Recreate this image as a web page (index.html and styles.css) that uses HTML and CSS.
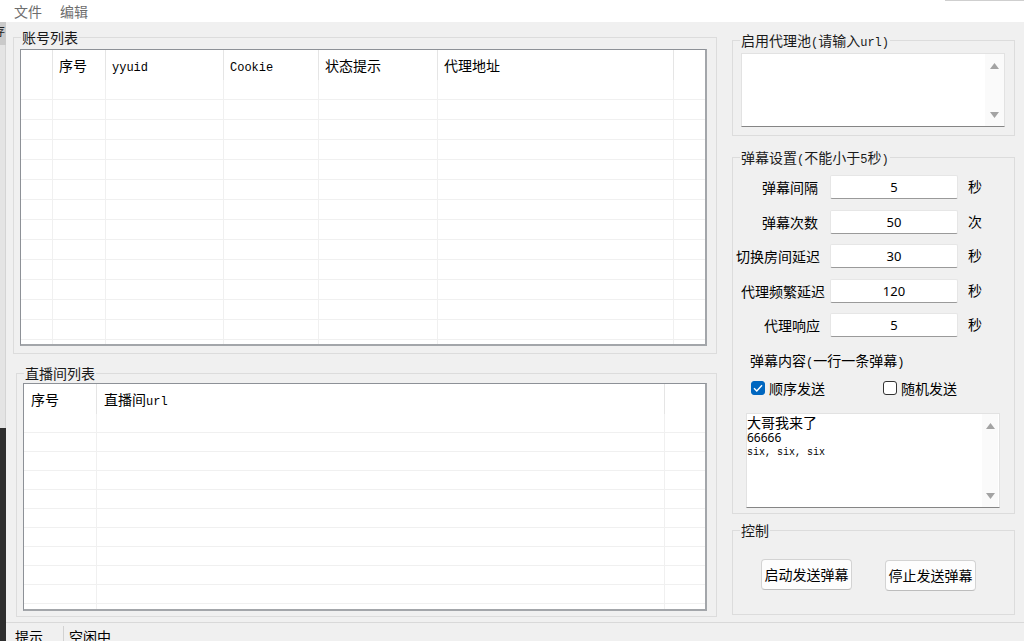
FILE: index.html
```html
<!DOCTYPE html>
<html lang="zh-CN">
<head>
<meta charset="utf-8">
<title>弹幕助手</title>
<link rel="stylesheet" href="styles.css">
</head>
<body>
<div class="window">
  <div class="menubar"><span class="menu-item">文件</span><span class="menu-item">编辑</span></div>
  <div class="main">
    <div class="left-col">
      <fieldset class="group acc-group">
        <legend>账号列表</legend>
        <div class="listview acc-lv">
          <div class="lv-row acc-cols lv-head">
            <div class="lv-cell"></div>
            <div class="lv-cell">序号</div>
            <div class="lv-cell"><span class="m">yyuid</span></div>
            <div class="lv-cell"><span class="m">Cookie</span></div>
            <div class="lv-cell">状态提示</div>
            <div class="lv-cell">代理地址</div>
            <div class="lv-cell last"></div>
          </div>
          <div class="lv-row acc-cols"><div class="lv-cell"></div><div class="lv-cell"></div><div class="lv-cell"></div><div class="lv-cell"></div><div class="lv-cell"></div><div class="lv-cell"></div><div class="lv-cell last"></div></div>
          <div class="lv-row acc-cols"><div class="lv-cell"></div><div class="lv-cell"></div><div class="lv-cell"></div><div class="lv-cell"></div><div class="lv-cell"></div><div class="lv-cell"></div><div class="lv-cell last"></div></div>
          <div class="lv-row acc-cols"><div class="lv-cell"></div><div class="lv-cell"></div><div class="lv-cell"></div><div class="lv-cell"></div><div class="lv-cell"></div><div class="lv-cell"></div><div class="lv-cell last"></div></div>
          <div class="lv-row acc-cols"><div class="lv-cell"></div><div class="lv-cell"></div><div class="lv-cell"></div><div class="lv-cell"></div><div class="lv-cell"></div><div class="lv-cell"></div><div class="lv-cell last"></div></div>
          <div class="lv-row acc-cols"><div class="lv-cell"></div><div class="lv-cell"></div><div class="lv-cell"></div><div class="lv-cell"></div><div class="lv-cell"></div><div class="lv-cell"></div><div class="lv-cell last"></div></div>
          <div class="lv-row acc-cols"><div class="lv-cell"></div><div class="lv-cell"></div><div class="lv-cell"></div><div class="lv-cell"></div><div class="lv-cell"></div><div class="lv-cell"></div><div class="lv-cell last"></div></div>
          <div class="lv-row acc-cols"><div class="lv-cell"></div><div class="lv-cell"></div><div class="lv-cell"></div><div class="lv-cell"></div><div class="lv-cell"></div><div class="lv-cell"></div><div class="lv-cell last"></div></div>
          <div class="lv-row acc-cols"><div class="lv-cell"></div><div class="lv-cell"></div><div class="lv-cell"></div><div class="lv-cell"></div><div class="lv-cell"></div><div class="lv-cell"></div><div class="lv-cell last"></div></div>
          <div class="lv-row acc-cols"><div class="lv-cell"></div><div class="lv-cell"></div><div class="lv-cell"></div><div class="lv-cell"></div><div class="lv-cell"></div><div class="lv-cell"></div><div class="lv-cell last"></div></div>
          <div class="lv-row acc-cols"><div class="lv-cell"></div><div class="lv-cell"></div><div class="lv-cell"></div><div class="lv-cell"></div><div class="lv-cell"></div><div class="lv-cell"></div><div class="lv-cell last"></div></div>
          <div class="lv-row acc-cols"><div class="lv-cell"></div><div class="lv-cell"></div><div class="lv-cell"></div><div class="lv-cell"></div><div class="lv-cell"></div><div class="lv-cell"></div><div class="lv-cell last"></div></div>
          <div class="lv-row acc-cols"><div class="lv-cell"></div><div class="lv-cell"></div><div class="lv-cell"></div><div class="lv-cell"></div><div class="lv-cell"></div><div class="lv-cell"></div><div class="lv-cell last"></div></div>
          <div class="lv-row acc-cols"><div class="lv-cell"></div><div class="lv-cell"></div><div class="lv-cell"></div><div class="lv-cell"></div><div class="lv-cell"></div><div class="lv-cell"></div><div class="lv-cell last"></div></div>
          <div class="lv-row acc-cols"><div class="lv-cell"></div><div class="lv-cell"></div><div class="lv-cell"></div><div class="lv-cell"></div><div class="lv-cell"></div><div class="lv-cell"></div><div class="lv-cell last"></div></div>
        </div>
      </fieldset>
      <fieldset class="group room-group">
        <legend>直播间列表</legend>
        <div class="listview room-lv">
          <div class="lv-row room-cols lv-head room-head">
            <div class="lv-cell">序号</div>
            <div class="lv-cell">直播间<span class="m">url</span></div>
            <div class="lv-cell last"></div>
          </div>
          <div class="lv-row room-cols room-row"><div class="lv-cell"></div><div class="lv-cell"></div><div class="lv-cell last"></div></div>
          <div class="lv-row room-cols room-row"><div class="lv-cell"></div><div class="lv-cell"></div><div class="lv-cell last"></div></div>
          <div class="lv-row room-cols room-row"><div class="lv-cell"></div><div class="lv-cell"></div><div class="lv-cell last"></div></div>
          <div class="lv-row room-cols room-row"><div class="lv-cell"></div><div class="lv-cell"></div><div class="lv-cell last"></div></div>
          <div class="lv-row room-cols room-row"><div class="lv-cell"></div><div class="lv-cell"></div><div class="lv-cell last"></div></div>
          <div class="lv-row room-cols room-row"><div class="lv-cell"></div><div class="lv-cell"></div><div class="lv-cell last"></div></div>
          <div class="lv-row room-cols room-row"><div class="lv-cell"></div><div class="lv-cell"></div><div class="lv-cell last"></div></div>
          <div class="lv-row room-cols room-row"><div class="lv-cell"></div><div class="lv-cell"></div><div class="lv-cell last"></div></div>
          <div class="lv-row room-cols room-row"><div class="lv-cell"></div><div class="lv-cell"></div><div class="lv-cell last"></div></div>
          <div class="lv-row room-cols room-row"><div class="lv-cell"></div><div class="lv-cell"></div><div class="lv-cell last"></div></div>
          <div class="lv-row room-cols room-row"><div class="lv-cell"></div><div class="lv-cell"></div><div class="lv-cell last"></div></div>
        </div>
      </fieldset>
    </div>

    <div class="right-col">
      <fieldset class="group proxy-group">
        <legend>启用代理池<span class="m">(</span>请输入<span class="m">url)</span></legend>
        <div class="edit proxy-edit">
          <div class="edit-text"></div>
          <div class="vscroll proxy-scroll">
            <svg width="9" height="6" viewBox="0 0 9 6"><path d="M4.5 0L9 6H0Z" fill="#a3a3a3"/></svg>
            <svg width="9" height="6" viewBox="0 0 9 6"><path d="M0 0H9L4.5 6Z" fill="#a3a3a3"/></svg>
          </div>
        </div>
      </fieldset>

      <fieldset class="group settings-group">
        <legend>弹幕设置<span class="m">(</span>不能小于<span class="m">5</span>秒<span class="m">)</span></legend>
        <div class="settings-grid">
          <div class="s-label">弹幕间隔</div><div class="s-input">5</div><div class="s-unit">秒</div>
          <div class="s-label">弹幕次数</div><div class="s-input">50</div><div class="s-unit">次</div>
          <div class="s-label mid">切换房间延迟</div><div class="s-input">30</div><div class="s-unit">秒</div>
          <div class="s-label wide">代理频繁延迟</div><div class="s-input">120</div><div class="s-unit">秒</div>
          <div class="s-label mid">代理响应</div><div class="s-input">5</div><div class="s-unit">秒</div>
        </div>
        <div class="content-label">弹幕内容<span class="m">(</span>一行一条弹幕<span class="m">)</span></div>
        <div class="check-row">
          <div class="check-item">
            <span class="checkbox checked"><svg width="10" height="8" viewBox="0 0 10 8"><path d="M1 4.2L3.8 7L9 1.2" fill="none" stroke="#ffffff" stroke-width="1.4"/></svg></span>
            <span>顺序发送</span>
          </div>
          <div class="check-item second">
            <span class="checkbox"></span>
            <span>随机发送</span>
          </div>
        </div>
        <div class="edit content-edit">
          <div class="edit-text content-text">
            <div class="line-cn">大哥我来了</div>
            <div class="line-num">66666</div>
            <div class="line-mono">six, six, six</div>
          </div>
          <div class="vscroll content-scroll">
            <svg width="9" height="6" viewBox="0 0 9 6"><path d="M4.5 0L9 6H0Z" fill="#a3a3a3"/></svg>
            <svg width="9" height="6" viewBox="0 0 9 6"><path d="M0 0H9L4.5 6Z" fill="#a3a3a3"/></svg>
          </div>
        </div>
      </fieldset>

      <fieldset class="group control-group">
        <legend>控制</legend>
        <div class="btn-row">
          <div class="btn">启动发送弹幕</div>
          <div class="btn second">停止发送弹幕</div>
        </div>
      </fieldset>
    </div>
  </div>
  <div class="statusbar">
    <div class="st-cell first">提示</div>
    <div class="st-cell">空闲中</div>
  </div>
</div>

<div class="edge">
  <div class="edge-tab"><span class="edge-glyph">存</span></div>
  <div class="edge-light"></div>
  <div class="edge-dark"></div>
</div>
<div class="top-box"></div>
</body>
</html>
```

FILE: styles.css
```css
* {
  box-sizing: border-box;
}

html, body {
  margin: 0;
  padding: 0;
}

body {
  width: 1024px;
  height: 641px;
  overflow: hidden;
  background: #f0f0f0;
  font-family: "Noto Sans CJK SC", "Noto Sans", sans-serif;
  font-size: 14px;
  color: #000;
  position: relative;
}

.m {
  font-family: "Liberation Mono", "DejaVu Sans Mono", monospace;
  font-size: 12px;
  line-height: 0;
}

.window {
  display: flex;
  flex-direction: column;
  height: 641px;
}

/* menu */
.menubar {
  height: 22px;
  background: #ffffff;
  display: flex;
  align-items: center;
  padding-left: 14px;
  gap: 18px;
  flex: none;
}

.menu-item {
  color: #6d6d6d;
  font-size: 14px;
  line-height: 22px;
}

/* main */
.main {
  height: 600px;
  flex: none;
  display: flex;
  gap: 15px;
  padding: 6px 0 0 13px;
}

.left-col {
  width: 704px;
  flex: none;
  display: flex;
  flex-direction: column;
}

.right-col {
  width: 283px;
  flex: none;
  display: flex;
  flex-direction: column;
  padding-top: 3px;
}

/* group boxes */
.group {
  margin: 0;
  padding: 0;
  min-inline-size: 0;
  border: 1px solid #dcdcdc;
}

.group legend {
  margin-left: 7px;
  padding: 0 1px;
  font-size: 14px;
  line-height: 18px;
  height: 18px;
  color: #1a1a1a;
}

.acc-group {
  width: 704px;
  height: 326px;
}

.room-group {
  width: 701px;
  height: 253px;
  margin: 10px 0 0 3px;
}

/* list views */
.listview {
  background: #ffffff;
  border: 1px solid #8d9197;
  border-right-width: 2px;
  border-bottom-width: 2px;
  border-right-color: #a3a6aa;
  border-bottom-color: #a3a6aa;
  overflow: hidden;
}

.acc-lv {
  width: 687px;
  height: 297px;
  margin: 3px 0 0 6px;
}

.room-lv {
  width: 684px;
  height: 228px;
  margin: 1px 0 0 6px;
}

.lv-row {
  display: grid;
  height: 20px;
  border-bottom: 1px solid #f0f0f0;
}

.acc-cols {
  grid-template-columns: 32px 53px 118px 95px 119px 236px 1fr;
}

.room-cols {
  grid-template-columns: 73px 568px 1fr;
}

.room-row {
  height: 19px;
}

.lv-cell {
  border-right: 1px solid #f0f0f0;
  padding-left: 6px;
  white-space: nowrap;
}

.lv-cell.last {
  border-right: none;
}

.lv-head {
  height: 30px;
  border-bottom: none;
}

.lv-head .lv-cell {
  border-right-color: #e5e5e5;
  line-height: 30px;
  font-size: 14px;
}

.lv-head .lv-cell.last {
  border-right: none;
}

.room-head .lv-cell {
  padding-left: 7px;
}

/* edit boxes */
.edit {
  display: flex;
  background: #ffffff;
  border: 1px solid #e2e2e2;
  border-bottom: 1px solid #858585;
}

.edit-text {
  flex: 1;
}

.vscroll {
  display: flex;
  flex-direction: column;
  justify-content: space-between;
  align-items: center;
  background: #fafafa;
}

.proxy-group {
  width: 283px;
  height: 105px;
}

.proxy-edit {
  width: 264px;
  height: 74px;
  margin: 4px 0 0 8px;
}

.proxy-scroll {
  width: 19px;
  padding: 9px 0 8px;
}

.settings-group {
  width: 283px;
  height: 366px;
  margin-top: 12px;
}

.settings-grid {
  display: grid;
  grid-template-columns: 85px 128px 1fr;
  column-gap: 12px;
  row-gap: 10.5px;
  margin-top: 9px;
}

.s-grid-fix {
  display: none;
}

.s-unit {
  margin-left: -3px;
}

.s-label {
  text-align: right;
  line-height: 24px;
  white-space: nowrap;
}

.s-label.mid {
  margin-right: -2px;
}

.s-label.wide {
  margin-right: -7px;
}

.s-input {
  height: 24px;
  background: #ffffff;
  border: 1px solid #e6e6e6;
  border-bottom: 1px solid #9a9a9a;
  border-radius: 2px;
  text-align: center;
  font-family: "Noto Sans", "Open Sans", sans-serif;
  font-size: 13px;
  line-height: 22px;
}

.s-unit {
  line-height: 22px;
  padding-left: 1px;
}

.content-label {
  margin: 14px 0 0 17px;
  line-height: 18px;
  height: 18px;
}

.check-row {
  display: flex;
  margin: 10px 0 0 18px;
  line-height: 18px;
  height: 18px;
}

.check-item {
  display: flex;
  align-items: center;
  gap: 4px;
}

.check-item.second {
  margin-left: 58px;
}

.checkbox {
  width: 14px;
  height: 14px;
  border: 1px solid #333333;
  border-radius: 3px;
  background: #ffffff;
  display: flex;
  align-items: center;
  justify-content: center;
}

.checkbox.checked {
  background: #0067c0;
  border-color: #0067c0;
}

.content-edit {
  width: 254px;
  height: 95px;
  margin: 16px 0 0 13px;
}

.content-text {
  white-space: nowrap;
}

.line-cn {
  font-size: 14px;
  line-height: 16px;
  height: 16px;
}

.line-num {
  font-family: "Noto Sans", sans-serif;
  font-size: 12px;
  line-height: 15px;
  height: 15px;
}

.line-mono {
  font-family: "Liberation Mono", monospace;
  font-size: 10px;
  line-height: 15px;
  height: 15px;
}

.content-scroll {
  width: 16px;
  margin-right: 1px;
  padding: 9px 0 8px;
}

/* control */
.control-group {
  width: 283px;
  height: 94px;
  margin-top: 7px;
}

.btn-row {
  display: flex;
  align-items: flex-start;
  margin: 20px 0 0 28px;
}

.btn {
  width: 91px;
  height: 31px;
  background: #fdfdfd;
  border: 1px solid #d3d3d3;
  border-bottom-color: #bdbdbd;
  border-radius: 4px;
  text-align: center;
  line-height: 29px;
  font-size: 14px;
  white-space: nowrap;
}

.btn.second {
  margin: 1px 0 0 33px;
}

/* status bar */
.statusbar {
  flex: 1;
  border-top: 1px solid #d9d9d9;
  display: flex;
  padding: 3px 0 0 15px;
}

.st-cell {
  line-height: 18px;
  padding-top: 1px;
}

.st-cell.first {
  width: 49px;
  border-right: 1px solid #d2d2d2;
  margin-right: 5px;
}

/* overlays from neighbouring windows */
.edge {
  position: absolute;
  left: 0;
  top: 22px;
  bottom: 0;
  width: 6px;
  display: flex;
  flex-direction: column;
}

.edge-tab {
  height: 23px;
  background: #cacaca;
  overflow: hidden;
  font-size: 12px;
  line-height: 18px;
}

.edge-glyph {
  display: block;
  margin-left: -7px;
  color: #222;
}

.edge-light {
  height: 383px;
  background: #e4e4e4;
  border-right: 1px solid #d4d4d4;
}

.edge-dark {
  flex: 1;
  background: #2e2e2e;
}

.top-box {
  position: absolute;
  left: 945px;
  top: 0;
  width: 79px;
  height: 1px;
  background: #cfcfcf;
}
```
